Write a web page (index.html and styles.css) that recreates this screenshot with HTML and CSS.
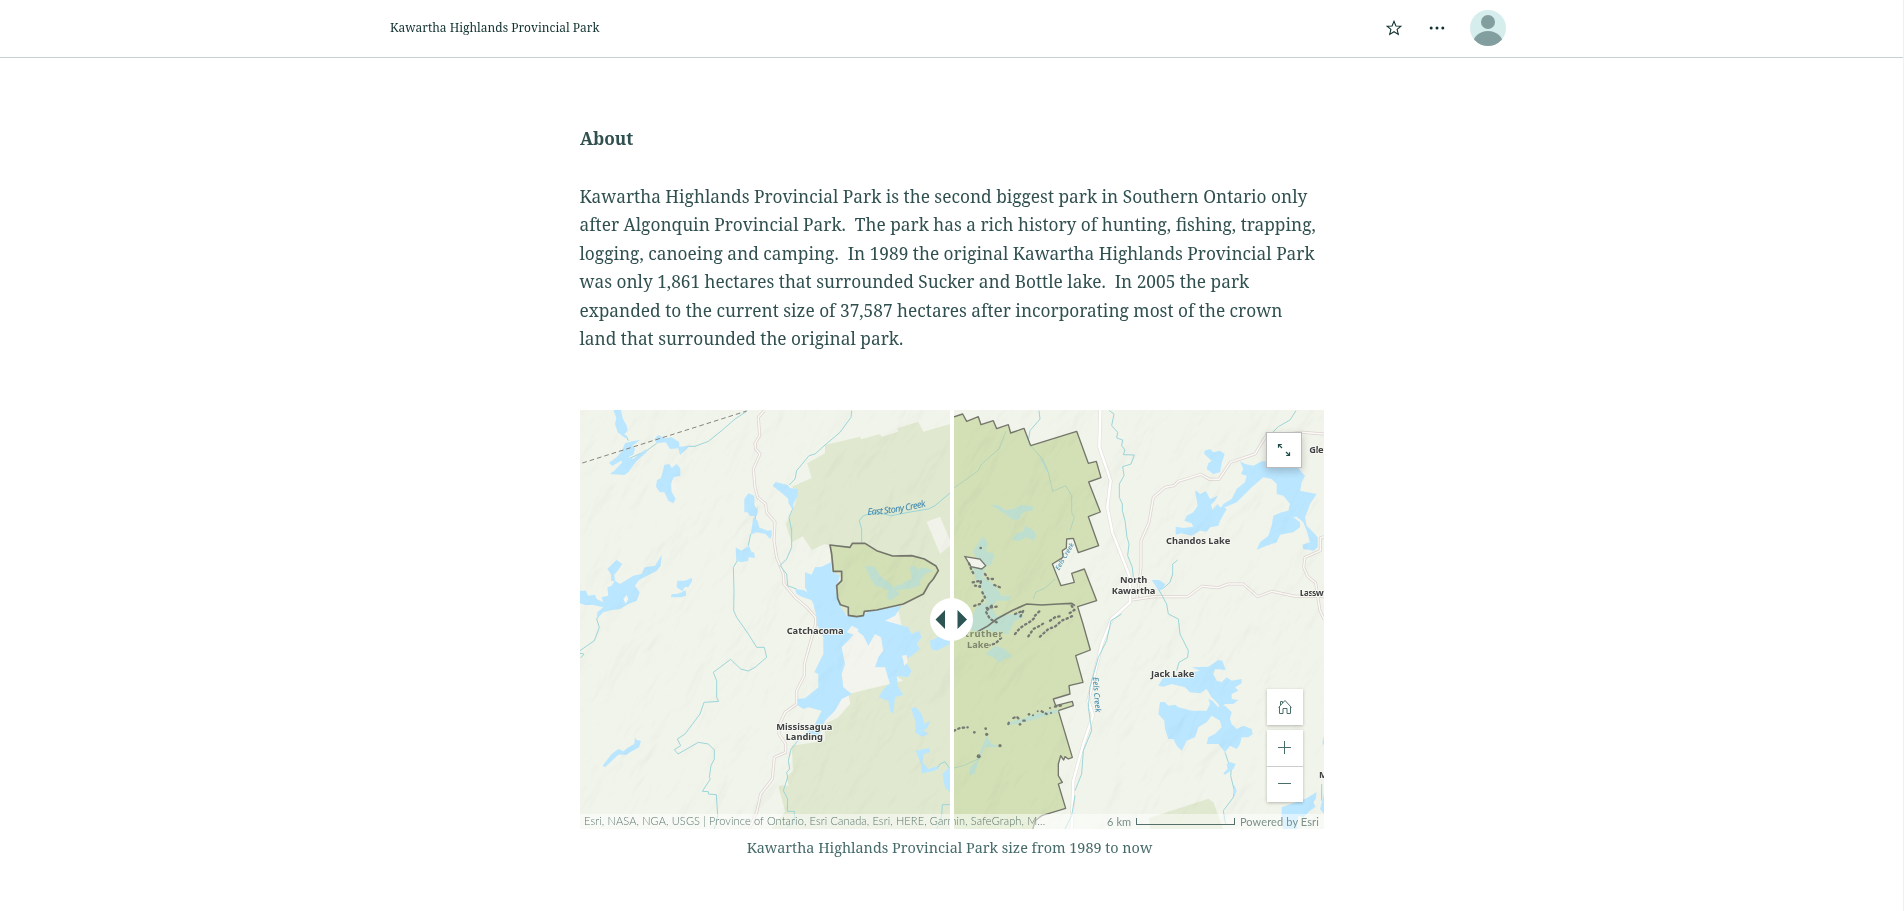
FILE: index.html
```html
<!DOCTYPE html>
<html lang="en">
<head>
<meta charset="utf-8">
<title>Kawartha Highlands Provincial Park</title>
<link rel="stylesheet" href="styles.css">
</head>
<body>
<header class="topbar">
  <div class="topbar-inner">
    <span class="story-title">Kawartha Highlands Provincial Park</span>
    <div class="actions">
      <svg class="star" viewBox="0 0 16 16" width="16" height="16"><path d="M8 1.2l1.9 4.7 5 .3-3.8 3.2 1.2 5L8 11.7l-4.300 2.700 1.200-5L1.100 6.200l5-.3z" fill="none" stroke="#10312f" stroke-width="1.050"/></svg>
      <svg class="dots" viewBox="0 0 16 16" width="16" height="16"><g fill="#10312f"><circle cx="2.200" cy="8" r="1.500"/><circle cx="8" cy="8" r="1.500"/><circle cx="13.800" cy="8" r="1.500"/></g></svg>
      <svg class="avatar" viewBox="0 0 36 36" width="36" height="36"><defs><clipPath id="av"><circle cx="18" cy="18" r="18"/></clipPath></defs><g clip-path="url(#av)"><rect width="36" height="36" fill="#d5edec"/><g fill="#829e9e"><circle cx="18" cy="12" r="7"/><ellipse cx="18" cy="34" rx="15" ry="13"/></g></g></svg>
    </div>
  </div>
</header>
<main class="story">
  <h1 class="heading">About</h1>
  <p class="copy">Kawartha Highlands Provincial Park is the second biggest park in Southern Ontario only<br>after Algonquin Provincial Park.&nbsp; The park has a rich history of hunting, fishing, trapping,<br>logging, canoeing and camping.&nbsp; In 1989 the original Kawartha Highlands Provincial Park<br>was only 1,861 hectares that surrounded Sucker and Bottle lake.&nbsp; In 2005 the park<br>expanded to the current size of 37,587 hectares after incorporating most of the crown<br>land that surrounded the original park.</p>
  <figure class="swipe">
    <div class="map">
      <svg class="map-canvas" viewBox="15 18 2232 1257" width="744" height="419">
        <defs>
          <filter id="relief" x="0" y="0" width="100%" height="100%" color-interpolation-filters="sRGB">
            <feTurbulence type="fractalNoise" baseFrequency="0.011 0.0045" numOctaves="4" seed="8"/>
            <feDiffuseLighting surfaceScale="16" diffuseConstant="1.150" lighting-color="#fff"><feDistantLight azimuth="215" elevation="60"/></feDiffuseLighting>
          </filter>
          <clipPath id="left"><rect x="15" y="18" width="1116" height="1257"/></clipPath>
          <clipPath id="right"><rect x="1131" y="18" width="1116" height="1257"/></clipPath>
        </defs>
        <rect x="15" y="18" width="2232" height="1257" fill="#f1f4ea"/>

        <!-- protected areas under the left layer -->
        <g clip-path="url(#left)">
          <path class="park" d="M1125 60L1045 83L1030 53L968 73L970 83L920 98L915 90L858 106L855 98L750 123V148L697 178L710 222L650 248L670 262L655 318L632 360L650 415L683 397L710 438L750 420L765 425L770 505L800 520L780 570L800 630L970 620L985 690L910 780L985 830L820 870L825 900L790 940L750 960V1010L650 1025L654 1100L634 1120L642 1145L610 1145L630 1222L590 1275H1125z"/>
          <path fill="#f1f3eb" d="M1055 353L1095 338L1130 420L1095 450z"/>
          <path fill="#f4f4ee" d="M750 490L790 520L778 590L800 640L970 635L950 690L975 705L960 760L940 800L950 835L890 850L820 870L825 900L750 950z"/>
        </g>
        <path class="park" d="M1722 1242L1900 1184L1915 1195L1945 1275H1725z"/>

        <!-- roads -->
        <g class="road-case"><path d="M568 20L550 40L554 95L540 118L542 135L555 150L535 195L540 250L548 280L572 300L575 325L600 355L597 410L605 460L625 510L627 540L660 580L695 610L722 640V660L705 720L688 780V815L665 860V900L630 925L612 965V990L632 1020V1045L598 1060L592 1125L557 1170L545 1225L523 1275"/><path d="M2247 90L2180 85L2072 98L2040 150L1966 175L1932 226L1904 226L1878 211L1810 232L1797 245L1770 250L1735 280L1722 355L1698 410V490L1686 582M1670 588L1735 578H1838L1880 547L1930 551L1960 540H2005L2048 578L2090 562L2160 577H2247M2247 398L2236 402V440L2190 460L2186 490L2198 517L2222 537L2228 577L2235 620L2247 645"/></g>
        <g class="road"><path d="M568 20L550 40L554 95L540 118L542 135L555 150L535 195L540 250L548 280L572 300L575 325L600 355L597 410L605 460L625 510L627 540L660 580L695 610L722 640V660L705 720L688 780V815L665 860V900L630 925L612 965V990L632 1020V1045L598 1060L592 1125L557 1170L545 1225L523 1275M2247 90L2180 85L2072 98L2040 150L1966 175L1932 226L1904 226L1878 211L1810 232L1797 245L1770 250L1735 280L1722 355L1698 410V490L1686 582M1670 588L1735 578H1838L1880 547L1930 551L1960 540H2005L2048 578L2090 562L2160 577H2247M2247 398L2236 402V440L2190 460L2186 490L2198 517L2222 537L2228 577L2235 620L2247 645"/></g>
        <path class="highway-case" d="M1576 18L1573 130L1607 230L1597 310L1612 385L1665 520V595L1610 645L1580 720L1540 890L1554 935L1525 1020L1495 1130L1490 1275"/>
        <path class="highway" d="M1576 18L1573 130L1607 230L1597 310L1612 385L1665 520V595L1610 645L1580 720L1540 890L1554 935L1525 1020L1495 1130L1490 1275"/>

        <!-- creeks -->
        <g class="creek">
          <path d="M515 22L480 45L440 80L400 112L360 127L335 127M160 165L215 140L245 118M153 95L160 110"/>
          <path d="M540 333L542 355M527 390L520 425M490 465L475 490L477 560L476 620L485 640L520 690L545 730L568 730L575 760L540 790L520 801L497 795L467 766L415 805L425 830V880L431 892L387 895L375 930L330 990L307 1005L317 1025L298 1037L309 1050L370 1015L400 1020L418 1038V1065L408 1085L403 1120L406 1125L382 1162L400 1163V1170L424 1172L428 1235L418 1275"/>
          <path d="M83 620L65 645L73 670L58 710L15 740M15 748L27 750L17 762"/>
          <path d="M830 20L828 40L795 85L750 123L720 150L702 155L665 200L660 225L643 243M655 310L642 340L650 380V430L635 465L615 485L635 510L638 545L665 555"/>
          <path d="M1125 267L1080 305L1060 315L1000 325L950 335L900 325L865 335L853 350L860 375V415L873 435L865 470L880 490"/>
          <path d="M665 1015L648 1035L640 1070L644 1095L635 1105L638 1120L625 1160L638 1185L637 1222H658V1255L635 1270M1125 1202H1102L1100 1235L1085 1275M1085 1095L1095 1080L1110 1073L1125 1095"/>
          <path d="M1603 20L1617 30L1610 65L1628 85L1625 102L1643 108L1640 125L1650 138L1645 152L1678 153L1668 180L1643 188L1647 215L1633 240V280L1642 300V320L1650 350L1656 400L1662 420L1658 455L1672 490L1675 520L1685 525"/>
          <path d="M1808 468L1793 480V510L1785 535L1768 550L1752 558L1775 600L1780 630L1810 645L1815 690L1840 740L1838 760L1812 775L1805 800"/>
          <path d="M2163 20L2145 48L2110 68L2090 88M1950 1045L1960 1075L1970 1085L1967 1115L1978 1160L1975 1180L1945 1220L1952 1262M1640 630L1608 650L1595 710L1570 760L1545 850L1540 910L1550 980L1525 1040L1520 1110L1500 1160M1500 1175L1490 1235L1470 1275M2240 1140V1190"/>
        </g>

        <!-- lakes, west -->
        <g class="lake">
          <path d="M115 18H138L143 43L155 65L158 80L148 90L157 98L150 102L128 85L120 60L124 43z"/>
          <path d="M150 118L170 112L195 108L172 125L180 135L175 152L160 160L175 165L213 135L215 145L185 170L160 205L148 213L105 210L118 200L142 175L138 170L112 186L102 176L125 160L140 142z"/>
          <path d="M238 105L250 93L268 103L290 100L313 115V128L345 125L315 153L310 133L285 135L272 115L245 118z"/>
          <path d="M268 183L283 180L290 192L305 180L316 193V215L295 220L288 242L290 263L302 285L295 298L280 290L268 265H255L243 248L246 228L258 222z"/>
          <path d="M508 285L520 268L538 275V302L545 315L548 303V325L545 336H525L518 325L508 325z"/>
          <path d="M535 340L548 350L552 370L578 380L590 378V395L585 405L572 390L545 385L527 392z"/>
          <path d="M482 430L498 440L522 425L530 445H537L540 462L520 460V470L500 475L484 470z"/>
          <path d="M593 245L602 234L638 243L645 252L670 255L668 275L655 300V320L640 297V285L630 275z"/>
          <path d="M97 495L125 468L142 480L128 500L118 512L120 530L135 540L175 515L200 510L210 490L240 485L260 452L257 485L245 500L192 528L180 545L194 565L185 590L160 600L135 615L110 618L85 625L65 645L67 625L85 610L55 603H30L15 598V560L32 560L40 575L60 572L65 585L85 595L80 580L100 575L97 550L110 545L118 532L108 530V510z"/>
          <path d="M305 550L307 530L330 530L350 522L352 530L340 550L330 548L322 560H333V575L318 580L288 580L290 570L305 570L325 563z"/>
          <path d="M83 1085L110 1050L130 1035L145 1042L160 1030L178 1020L180 1000L185 1008L198 1010L192 1030L165 1045L155 1052H130L90 1090z"/>
        </g>
        <g clip-path="url(#left)"><g class="lake">
          <path d="M690 505L710 512L720 490L740 488L768 475L770 502L795 515L782 560L795 605L815 635L870 630L880 622L980 605L960 635L930 650L965 660L1000 670L1010 690L1030 680L1040 700L1025 720L1035 735L1010 755L985 770L1000 785L1010 800L1000 820L965 815L970 850L985 872L960 880L955 930L945 920L940 890L910 880L930 850L945 840L930 790L900 790L910 760L925 740L918 700L900 690L880 725L865 695L845 680L820 710L800 730L810 780L800 810L805 850L830 870L800 885L780 920L750 950L740 980L725 1000L690 995L660 1020L668 1005L715 970L740 920L700 910L685 915L670 905L667 885L690 883L730 850V810L718 805L740 760L745 750V700L725 660V640L715 600L690 550z"/>
          <path d="M660 555L685 558L715 575L715 590L680 578L665 570zM1065 710L1100 695L1125 690V720L1085 740L1068 735zM1008 912L1022 910L1040 930L1048 960L1065 950L1058 970L1045 980L1062 990L1040 998L1020 985L1022 955z"/>
          <path d="M1022 1040L1062 1032L1065 1045L1045 1050L1042 1075L1060 1095L1090 1085L1085 1098L1060 1105L1040 1108L1038 1080zM1102 1110L1125 1088V1165L1110 1150z"/>
          </g>
          <path fill="#f3f4ed" d="M981 755L995 753L998 775L988 785zM830 665L850 675L845 695L815 685z"/>
          <path class="boundary local" d="M765 423L825 430L832 418L870 418L905 440L953 456L1010 455L1048 465L1083 486L1090 500L1075 525L1062 540L1045 570L985 600L905 618L868 622L865 635L845 638L820 634V610L796 602L788 583L785 545L800 530V502H775L770 450z"/>
          <g class="covered"><path d="M870 485L900 490L915 515L948 540L957 555L975 570L945 590L935 580L940 560L915 548L900 545L885 520z"/><path d="M1005 490L1020 485L1030 498L1040 490L1060 495L1075 500L1050 510L1035 530V545L1000 555L955 560L960 545L985 540V535L1010 525z"/></g>
        </g>
        <path fill="#f5f5ef" d="M145 585L155 573L160 585L152 600zM292 228L304 235L302 258L290 260z"/>

        <!-- lakes, east -->
        <g class="lake">
          <path d="M1888 140L1905 135L1915 145L1935 140L1949 150L1940 178L1935 205L1915 210L1895 195L1900 178L1910 170L1888 150z"/>
          <path d="M1860 258L1875 270L1893 262L1905 285L1928 276L1920 290L1908 302L1912 318L1928 300L1935 310L1945 308L1955 315L1935 350L1930 365L1905 370L1895 383L1875 380L1850 395L1820 388L1802 392V368L1825 372L1855 368L1850 358L1828 350L1835 335L1855 325L1868 305z"/>
          <path d="M1995 172L2010 180L2035 185L2060 172H2100L2165 185L2180 205L2190 215L2180 235L2175 260L2225 270L2205 300L2200 315L2190 340L2195 365L2215 385L2228 400V430L2215 440L2185 435L2182 422L2205 415L2195 380L2185 355L2165 338L2155 340L2175 355V370L2155 385L2115 392L2105 415L2075 425L2045 437L2055 415L2080 395L2090 365L2095 335L2120 325L2140 320L2145 300L2125 275L2105 270V240L2090 225L2065 220L2030 250L2010 270L1985 295L1950 310L1937 315L1945 300L1970 285L1985 255L2010 235L2015 215L1998 210L2005 195z"/>
          <path d="M2070 85L2100 90V170H2080z"/>
          <path d="M1730 528H1752L1770 540L1765 555L1750 560L1742 545z"/>
          <path d="M1850 790L1900 788L1930 768L1942 770L1952 798L1920 795L1915 810L1925 830L1940 835L1955 820L1970 830L2000 825V838L1980 850L1990 860L1970 870V885L1990 888L1975 900L1950 900L1935 915L1930 900L1910 880L1895 855L1875 868L1845 865L1830 850L1790 840L1765 848L1750 845L1765 820L1800 815L1875 800z"/>
          <path d="M1755 895L1768 893L1780 905L1800 902L1810 910L1850 920L1895 920L1905 900L1900 885L1912 890L1930 910L1950 905L1970 925L1965 945L1970 960L1985 975L2005 965L2030 975L2033 990L2020 1000L2000 1000L1995 1020L1985 1035L1965 1025L1950 1045L1930 1020H1895L1900 1000L1920 990L1940 970L1935 950L1910 935L1895 955L1870 970L1860 1000L1835 1010L1820 1040L1805 1025L1795 1005L1780 1005L1770 975L1768 950L1750 930z"/>
          <path d="M1955 1080L1965 1074L1982 1080L1975 1095L1950 1112L1945 1108L1958 1095zM1978 1142L1985 1160L1978 1178L1975 1160zM2120 1210L2190 1185L2225 1165L2222 1185L2215 1195L2222 1208L2205 1220L2185 1240L2170 1235L2165 1275L2125 1275L2120 1235zM2240 1195L2247 1170V1230L2235 1215zM2247 995V1025L2242 1015z"/>
        </g>

        <!-- 2005 park boundary, right layer -->
        <g clip-path="url(#right)">
          <path class="creek" d="M1392 20L1395 45L1365 80L1360 110"/>
          <path class="boundary" d="M1120 44L1163 30L1175 52L1210 38L1218 62L1255 50L1265 74L1300 62L1307 87L1347 73L1367 125L1505 82L1540 178L1564 172L1578 221L1541 234L1576 324L1540 338L1571 425L1510 446L1495 403L1475 405L1474 432L1462 440L1464 460L1432 480L1458 545L1498 535L1490 508L1528 495L1565 590L1508 608L1524 660L1546 738L1502 755L1524 835L1482 845L1485 870L1435 885L1442 905L1492 892L1495 905L1450 920L1492 1060L1480 1065L1470 1058L1466 1068L1457 1055L1450 1080V1115L1462 1135L1450 1140L1472 1213L1400 1235L1380 1250L1370 1290H1120z"/>
          <g class="covered">
            <path d="M1245 302L1270 304L1290 318L1315 315L1335 303L1373 306V320L1355 322L1340 330L1335 345L1315 348L1290 330zM1350 365L1375 378L1385 395L1375 410L1355 400L1330 412L1310 405L1325 388L1345 382z"/>
            <path d="M1223 397L1238 415L1232 440L1258 450L1250 480L1230 490L1225 520L1255 540L1280 575L1308 575L1300 590L1265 590L1250 610L1265 635L1340 628L1345 640L1320 650L1300 690L1265 690L1230 700L1190 685V640L1205 610L1235 595L1222 560L1200 520L1190 480L1205 470L1195 440z"/>
            <path d="M1260 725L1290 735L1312 758L1285 765L1275 778L1255 760L1230 750zM1235 995L1250 1020L1270 1025L1265 1030L1230 1030L1208 1075L1200 1110L1182 1112L1185 1090L1205 1070L1220 1030zM1300 955L1340 945L1380 930L1450 915V925L1365 950L1300 965zM1395 165L1405 165L1420 205H1415z"/>
          </g>
          <g class="soft-creek"><path d="M1137 252L1210 200L1220 180L1272 135L1293 82M1367 125L1402 165L1420 205L1433 262L1472 245L1490 275V325L1498 340L1485 380M1137 1092L1165 1085L1220 1060M1440 525L1410 552L1382 565L1375 585"/></g>
          <path class="hole" d="M1170 458L1215 465L1232 485L1220 495L1188 488L1180 475z"/>
          <path class="shore" d="M1205 685L1240 665L1265 645L1310 620L1355 600L1400 603L1450 600L1490 598L1500 605"/>
          <path class="islands" d="M1182 478L1190 500L1200 515M1193 535L1218 530L1215 548L1200 545M1230 510L1240 525L1255 525M1258 543L1280 552M1222 565L1230 580L1215 600L1190 608M1250 605L1232 622L1245 645L1265 655M1265 608L1235 612M1320 630L1345 620L1335 640M1380 635L1395 620M1490 605L1498 618L1480 630M1320 690L1335 672L1350 662L1370 650L1380 640M1360 697L1375 675L1395 665L1410 655M1425 650L1440 640L1455 637M1395 698L1420 675L1440 668L1460 650L1480 642L1500 632M1240 725L1262 718L1280 700M1137 980L1155 972L1178 970M1197 985M1300 960L1305 948M1315 942L1325 938L1335 948M1345 950H1358M1400 922L1415 930M1440 908L1460 904"/>
          <g class="islet"><circle cx="1217" cy="432" r="4"/><circle cx="1211" cy="1057" r="6"/><circle cx="1275" cy="1025" r="5"/><circle cx="1198" cy="985" r="4"/><circle cx="1232" cy="974" r="4"/><circle cx="1235" cy="991" r="5"/><circle cx="1335" cy="961" r="4"/><circle cx="1362" cy="931" r="4"/><circle cx="1374" cy="934" r="3"/><circle cx="1388" cy="922" r="3"/><circle cx="1425" cy="912" r="3"/><circle cx="1428" cy="927" r="3"/></g>
        </g>

        <path d="M22 177L515 21" fill="none" stroke="#858580" stroke-width="3" stroke-dasharray="14 9"/>
        <g class="relief" transform="rotate(28 1130 640)"><rect x="-300" y="-600" width="2900" height="2500" filter="url(#relief)"/></g>

        <g class="labels">
          <text x="1773" y="421" textLength="193">Chandos Lake</text>
          <text x="1635" y="537" textLength="82">North</text><text x="1610" y="569" textLength="131">Kawartha</text>
          <text x="2174" y="576" textLength="72">Lassw</text><text x="2203" y="148" textLength="43">Gle</text>
          <text x="1728" y="818" textLength="130">Jack Lake</text>
          <text x="635" y="690" textLength="171">Catchacoma</text>
          <text x="604" y="977" textLength="168">Mississagua</text><text x="632" y="1009" textLength="112">Landing</text>
          <text x="2232" y="1122">M</text>
          <g clip-path="url(#right)" class="faded"><text x="1153" y="699" textLength="130">Struther</text><text x="1176" y="732" textLength="66">Lake</text></g>
        </g>
        <path id="stony" d="M878 333Q960 330 1057 306" fill="none"/>
        <path id="eels" d="M1553 820Q1558 880 1562 930" fill="none"/>
        <text class="water-label"><textPath href="#stony" textLength="178">East Stony Creek</textPath></text>
        <text class="water-label eels"><textPath href="#eels" textLength="106">Eels Creek</textPath></text>
        <text class="water-label small" transform="translate(1452 500) rotate(-60)">Eels Creek</text>
      </svg>
      <div class="credits">
        <span class="sources">Esri, NASA, NGA, USGS | Province of Ontario, Esri Canada, Esri, HERE, Garmin, SafeGraph, M…</span>
        <span class="scale">6 km<i class="scale-bar"></i></span>
        <span class="powered">Powered by Esri</span>
      </div>
      <div class="divider"></div>
      <svg class="handle" viewBox="0 0 43 43" width="43" height="43"><circle cx="21.500" cy="21.500" r="21.500" fill="#fff"/><path d="M5.500 21.500L15 12v19zM37 21.500L27.500 12v19z" fill="#2d5553"/></svg>
      <div class="control expand"><svg viewBox="0 0 14 14" width="14" height="14"><path d="M1.500 4.800V1.500h3.300M1.700 1.700L5 5M12.500 9.200V12.500H9.200M12.300 12.300L9 9" fill="none" stroke="#1f4b47" stroke-width="1.200"/></svg></div>
      <div class="tools">
        <div class="control home"><svg viewBox="0 0 16 16" width="16" height="16"><path d="M1.500 8.500L8 1.500l6.500 7M2.500 8v6.500H6v-5h4v5h3.500V8M3.500 6V2.500h2v1.500" fill="none" stroke="#4a6e6a" stroke-width="1"/></svg></div>
        <div class="zoom-group">
          <div class="zoom-btn"><svg viewBox="0 0 14 14" width="14" height="14"><path d="M0 6.500h13M6.500 0v13" stroke="#4a6e6a"/></svg></div>
          <div class="zoom-btn"><svg viewBox="0 0 14 14" width="14" height="14"><path d="M0 5.500h13" stroke="#4a6e6a"/></svg></div>
        </div>
      </div>
    </div>
    <figcaption class="caption">Kawartha Highlands Provincial Park size from 1989 to now</figcaption>
  </figure>
</main>
</body>
</html>
```
FILE: styles.css
```css
* { box-sizing: border-box; }
body {
  margin: 0;
  height: 911px;
  overflow: hidden;
  background: #fff;
  border-right: 1px solid #f0f0f0;
  color: #304f4f;
  font-family: "Noto Serif", "DejaVu Serif Condensed", "DejaVu Serif", serif;
}
.topbar { height: 58px; border-bottom: 1px solid #c5d2d2; }
.topbar-inner {
  height: 56px;
  margin: 0 397px 0 390px;
  display: flex;
  align-items: center;
  justify-content: space-between;
}
.story-title { font-size: 12px; line-height: 16px; padding-bottom: 1px; color: #10312f; white-space: nowrap; }
.actions { display: flex; align-items: center; gap: 27px; }
.actions .avatar { margin-left: -2px; }
.story { width: 745px; margin: 0 0 0 579px; padding-top: 67px; }
.heading { margin: 0; padding-left: 1px; font-size: 17.300px; line-height: 28px; font-weight: 700; }
.copy { margin: 30px 0 0; padding-left: .5px; font-size: 17.300px; line-height: 28.4px; white-space: nowrap; }
.swipe { margin: 57px 0 0 1px; }
.map { position: relative; width: 744px; height: 419px; overflow: hidden; }
.map-canvas { display: block; }
.park { fill: #e0e9d0; }
.lake { fill: #bae6ff; }
.creek, .soft-creek { fill: none; stroke: #96d3d8; stroke-width: 2.800; }
.soft-creek { stroke: #add2b9; }
.road-case { fill: none; stroke: #dcd4d0; stroke-width: 9; stroke-linejoin: round; }
.road { fill: none; stroke: #fbf9f6; stroke-width: 4.500; stroke-linejoin: round; }
.highway-case { fill: none; stroke: #e2dfd8; stroke-width: 11; stroke-linejoin: round; }
.highway { fill: none; stroke: #fff; stroke-width: 7.500; stroke-linejoin: round; }
.boundary { fill: #d3e0b6; stroke: #74766c; stroke-width: 4; stroke-linejoin: round; }
.boundary.local { stroke-width: 5; }
.covered { fill: #bedfcf; }
.hole { fill: #f2f4eb; stroke: #74766c; stroke-width: 4; }
.shore { fill: none; stroke: #74766c; stroke-width: 5; }
.islands { fill: none; stroke: #767a72; stroke-width: 7; stroke-dasharray: 4 10; stroke-linecap: round; }
.islet { fill: #767a72; }
.relief { mix-blend-mode: multiply; opacity: .06; }
.labels text {
  font: 700 28px "Noto Sans", sans-serif;
  fill: #3f4143;
  stroke: #f7f8f2;
  stroke-width: 5;
  paint-order: stroke;
}
.labels .faded text { fill: #81876f; stroke: #d1dfb2; }
.water-label { font: italic 500 28px "Noto Sans", sans-serif; fill: #4e91b2; }
.water-label.eels { font-size: 24px; }
.water-label.small { font-size: 20px; }
.credits {
  position: absolute;
  inset: auto 0 0 0;
  height: 15px;
  padding: 0 5px 0 4px;
  display: flex;
  align-items: center;
  background: rgba(255, 255, 255, .5);
  color: #7b908a;
  font: 400 11px/15px Lato, sans-serif;
  white-space: nowrap;
}
.sources { width: 523px; padding-bottom: 2px; font-weight: 300; letter-spacing: .13px; color: #5c766f; }
.scale { width: 132px; display: flex; gap: 5px; align-items: center; letter-spacing: .1px; }
.scale-bar { width: 99px; height: 7px; border: 1px solid #55706a; border-top: 0; }
.powered { letter-spacing: .12px; margin-left: auto; }
.divider { position: absolute; top: 0; left: 370px; width: 4px; height: 419px; background: #fff; }
.handle { position: absolute; left: 350px; top: 188px; }
.control, .zoom-btn { width: 36px; height: 36px; background: #fff; display: grid; place-items: center; }
.expand {
  position: absolute;
  left: 686px;
  top: 22px;
  border: 1px solid #bbb;
  box-shadow: 0 3px 8px rgba(0, 0, 0, .2);
}
.tools { position: absolute; left: 687px; top: 279px; display: grid; gap: 5px; }
.home, .zoom-group { box-shadow: 0 1px 3px rgba(0, 0, 0, .25); }
.zoom-btn + .zoom-btn { border-top: 1px solid #ccc; }
.caption { margin: 8px 0 0; padding-right: 5px; text-align: center; font-size: 14.400px; line-height: 22px; color: #456a69; white-space: nowrap; }
```
